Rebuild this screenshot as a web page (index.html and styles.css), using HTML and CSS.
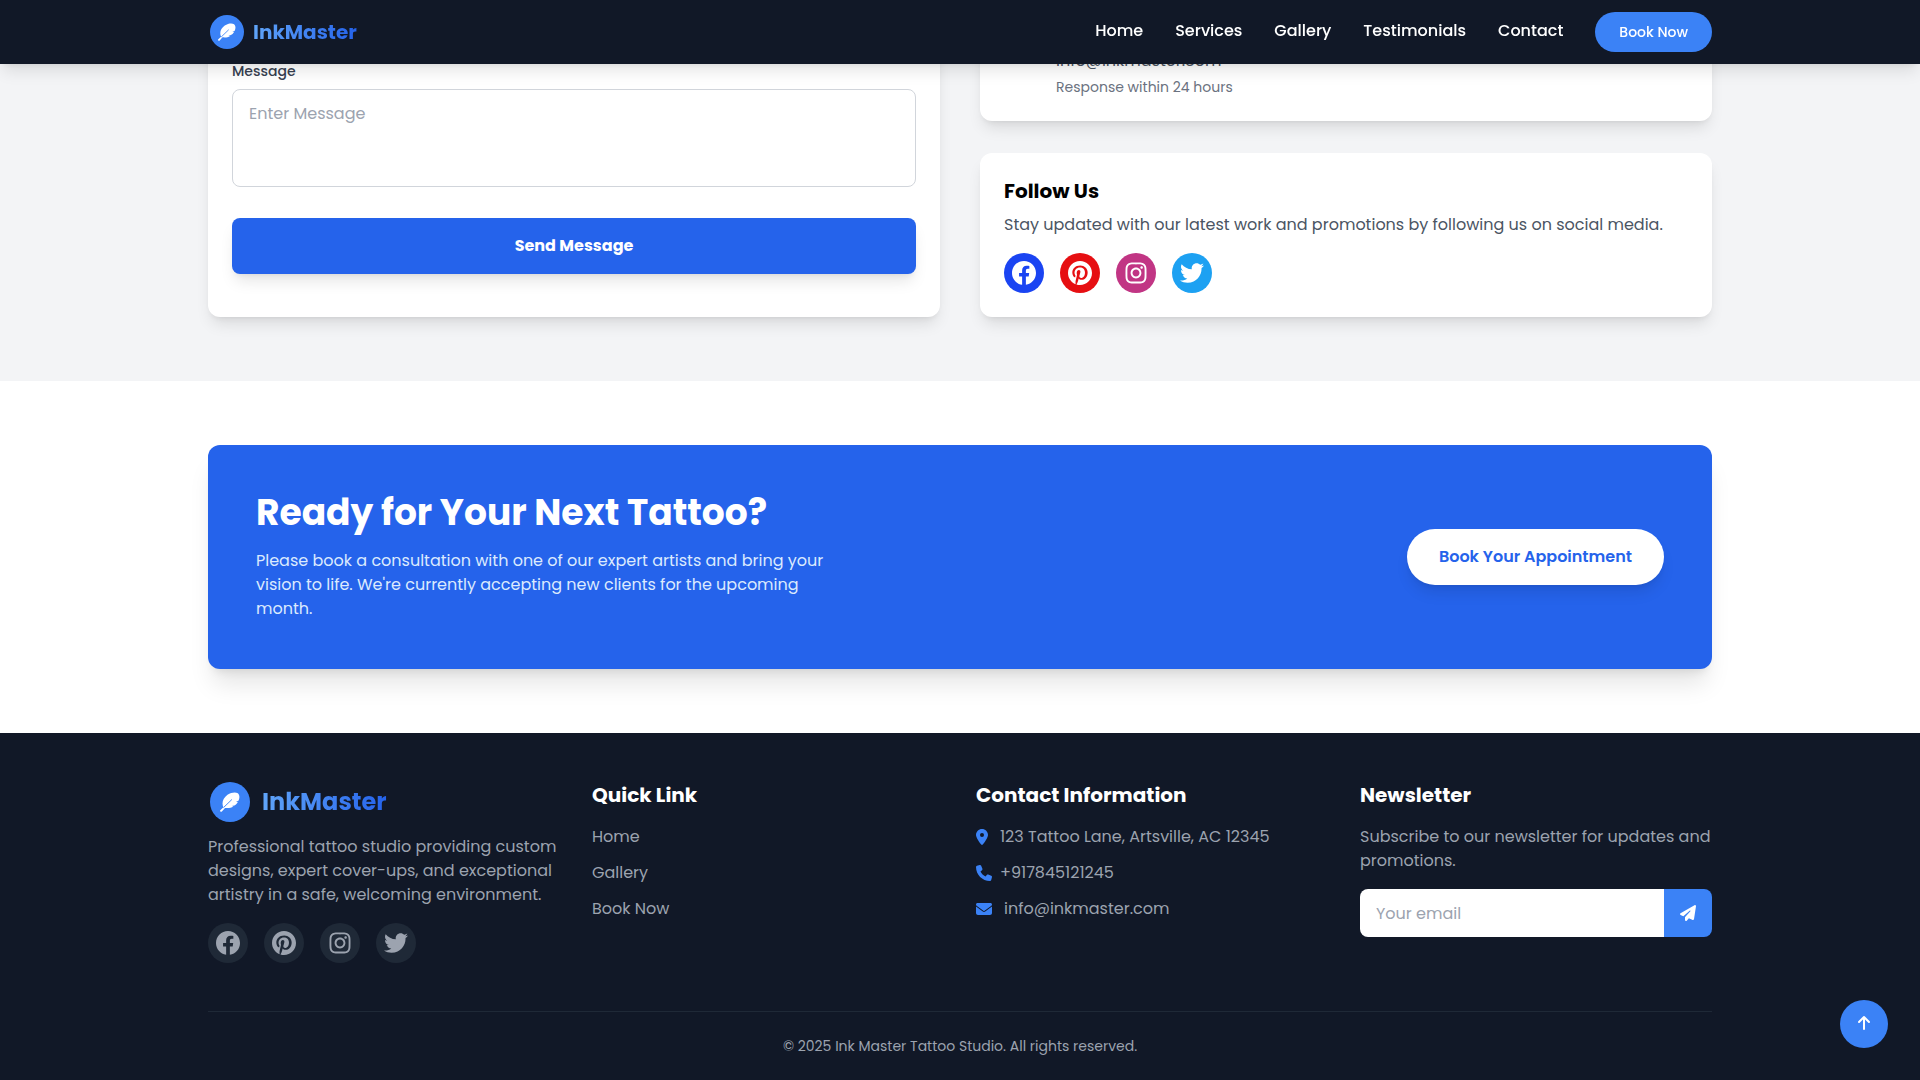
FILE: index.html
```html
<!DOCTYPE html>
<html lang="en">
<head>
    <meta charset="UTF-8">
    <meta name="viewport" content="width=device-width, initial-scale=1.0">
    <title>InkMaster</title>

    <link rel="stylesheet" href="styles.css">
</head>
<body>

    <!-- shared icons -->
    <svg class="sprite" aria-hidden="true">
        <symbol id="feather" viewBox="0 0 64 64"><path d="M11 49C4 34 10 20 24 9C36 1 50 0 57 4C64 10 63 20 59 28L51 31L57 32C54 38 50 41 46 43L37 45L43 46C35 52 24 52 16 51L6 62C3 65-2 61 1 58Z"/><path class="slit" d="M11 50L38 24"/></symbol>
        <symbol id="facebook" viewBox="8 8 496 496"><path d="M504 256C504 119 393 8 256 8S8 119 8 256c0 123.78 90.69 226.38 209.25 245V327.69h-63V256h63v-54.64c0-62.15 37-96.48 93.67-96.48 27.14 0 55.52 4.84 55.52 4.84v61h-31.28c-30.8 0-40.41 19.12-40.41 38.73V256h68.78l-11 71.69h-57.78V501C413.31 482.38 504 379.78 504 256z"/></symbol>
        <symbol id="pinterest" viewBox="0 8 496 496"><path d="M496 256c0 137-111 248-248 248-25.6 0-50.2-3.9-73.4-11.1 10.1-16.5 25.2-43.5 30.8-65 3-11.6 15.4-59 15.4-59 8.1 15.4 31.7 28.5 56.8 28.5 74.8 0 128.7-68.8 128.7-154.3 0-81.9-66.9-143.2-152.9-143.2-107 0-163.9 71.8-163.9 150.1 0 36.4 19.4 81.7 50.3 96.1 4.7 2.2 7.2 1.2 8.3-3.3.8-3.4 5-20.3 6.9-28.1.6-2.5.3-4.7-1.7-7.1-10.1-12.5-18.3-35.3-18.3-56.6 0-54.7 41.4-107.6 112-107.6 60.9 0 103.6 41.5 103.6 100.9 0 67.1-33.9 113.6-78 113.6-24.3 0-42.6-20.1-36.7-44.8 7-29.5 20.5-61.3 20.5-82.6 0-19-10.2-34.9-31.4-34.9-24.9 0-44.9 25.7-44.9 60.2 0 22 7.4 36.8 7.4 36.8s-24.5 103.8-29 123.2c-5 21.4-3 51.6-.9 71.2C65.4 450.9 0 361.1 0 256 0 119 111 8 248 8s248 111 248 248z"/></symbol>
        <symbol id="instagram" viewBox="0 0 448 512"><path d="M224.1 141c-63.6 0-114.9 51.3-114.9 114.9s51.3 114.9 114.9 114.9S339 319.5 339 255.9 287.7 141 224.1 141zm0 189.6c-41.1 0-74.7-33.5-74.7-74.7s33.5-74.7 74.7-74.7 74.7 33.5 74.7 74.7-33.6 74.7-74.7 74.7zm146.4-194.3c0 14.9-12 26.8-26.8 26.8-14.9 0-26.8-12-26.8-26.8s12-26.8 26.8-26.8 26.8 12 26.8 26.8zm76.1 27.2c-1.7-35.9-9.9-67.7-36.2-93.9-26.2-26.2-58-34.4-93.9-36.2-37-2.1-147.9-2.1-184.9 0-35.8 1.7-67.6 9.9-93.9 36.1s-34.4 58-36.2 93.9c-2.1 37-2.1 147.9 0 184.9 1.7 35.9 9.9 67.7 36.2 93.9s58 34.4 93.9 36.2c37 2.1 147.9 2.1 184.9 0 35.9-1.7 67.7-9.9 93.9-36.2 26.2-26.2 34.4-58 36.2-93.9 2.1-37 2.1-147.8 0-184.8zM398.8 388c-7.8 19.6-22.9 34.7-42.6 42.6-29.5 11.7-99.5 9-132.1 9s-102.7 2.6-132.1-9c-19.6-7.8-34.7-22.9-42.6-42.6-11.7-29.5-9-99.5-9-132.1s-2.6-102.7 9-132.1c7.8-19.6 22.9-34.7 42.6-42.6 29.5-11.7 99.5-9 132.1-9s102.7-2.6 132.1 9c19.6 7.8 34.7 22.9 42.6 42.6 11.7 29.5 9 99.5 9 132.1s2.7 102.7-9 132.1z"/></symbol>
        <symbol id="twitter" viewBox="0 0 512 512"><path d="M459.37 151.716c.325 4.548.325 9.097.325 13.645 0 138.72-105.583 298.558-298.558 298.558-59.452 0-114.68-17.219-161.137-47.106 8.447.974 16.568 1.299 25.34 1.299 49.055 0 94.213-16.568 130.274-44.832-46.132-.975-84.792-31.188-98.112-72.772 6.498.974 12.995 1.624 19.818 1.624 9.421 0 18.843-1.3 27.614-3.573-48.081-9.747-84.143-51.98-84.143-102.985v-1.299c13.969 7.797 30.214 12.67 47.431 13.319-28.264-18.843-46.781-51.005-46.781-87.391 0-19.492 5.197-37.36 14.294-52.954 51.655 63.675 129.3 105.258 216.365 109.807-1.624-7.797-2.599-15.918-2.599-24.04 0-57.828 46.782-104.934 104.934-104.934 30.213 0 57.502 12.67 76.67 33.137 23.715-4.548 46.456-13.32 66.599-25.34-7.798 24.366-24.366 44.833-46.132 57.827 21.117-2.273 41.584-8.122 60.426-16.243-14.292 20.791-32.161 39.308-52.628 54.253z"/></symbol>
    </svg>

    <header class="navbar">
        <div class="container nav-content">
            <a href="#" class="logo">
                <span class="logo-icon"><svg><use href="#feather"/></svg></span>
                <span class="logo-text">InkMaster</span>
            </a>

            <nav class="nav-links">
                <a href="#">Home</a>
                <a href="#">Services</a>
                <a href="#">Gallery</a>
                <a href="#">Testimonials</a>
                <a href="#">Contact</a>
                <button type="button" class="nav-button">Book Now</button>
            </nav>
        </div>
    </header>

    <main>
        <section class="contact">
            <div class="container contact-grid">

                <form class="card contact-form">
                    <label for="message">Message</label>
                    <textarea id="message" name="message" placeholder="Enter Message"></textarea>
                    <button type="submit" class="send-button">Send Message</button>
                </form>

                <div class="contact-side">
                    <div class="card email-card">
                        <p class="email-address">info@inkmaster.com</p>
                        <p class="email-note">Response within 24 hours</p>
                    </div>

                    <div class="card follow-card">
                        <h3>Follow Us</h3>
                        <p>Stay updated with our latest work and promotions by following us on social media.</p>
                        <div class="socials">
                            <a href="#" class="facebook" aria-label="Facebook"><svg><use href="#facebook"/></svg></a>
                            <a href="#" class="pinterest" aria-label="Pinterest"><svg><use href="#pinterest"/></svg></a>
                            <a href="#" class="instagram" aria-label="Instagram"><svg><use href="#instagram"/></svg></a>
                            <a href="#" class="twitter" aria-label="Twitter"><svg><use href="#twitter"/></svg></a>
                        </div>
                    </div>
                </div>

            </div>
        </section>

        <section class="cta">
            <div class="container">
                <div class="cta-box">
                    <div class="cta-text">
                        <h2>Ready for Your Next Tattoo?</h2>
                        <p>Please book a consultation with one of our expert artists and bring your vision to life. We're currently accepting new clients for the upcoming month.</p>
                    </div>
                    <button type="button" class="cta-button">Book Your Appointment</button>
                </div>
            </div>
        </section>
    </main>

    <footer class="footer">
        <div class="container">
            <div class="footer-grid">

                <div class="footer-about">
                    <a href="#" class="logo logo-large">
                        <span class="logo-icon"><svg><use href="#feather"/></svg></span>
                        <span class="logo-text">InkMaster</span>
                    </a>
                    <p>Professional tattoo studio providing custom designs, expert cover-ups, and exceptional artistry in a safe, welcoming environment.</p>
                    <div class="socials">
                        <a href="#" aria-label="Facebook"><svg><use href="#facebook"/></svg></a>
                        <a href="#" aria-label="Pinterest"><svg><use href="#pinterest"/></svg></a>
                        <a href="#" aria-label="Instagram"><svg><use href="#instagram"/></svg></a>
                        <a href="#" aria-label="Twitter"><svg><use href="#twitter"/></svg></a>
                    </div>
                </div>

                <div>
                    <h3>Quick Link</h3>
                    <ul>
                        <li><a href="#">Home</a></li>
                        <li><a href="#">Gallery</a></li>
                        <li><a href="#">Book Now</a></li>
                    </ul>
                </div>

                <div>
                    <h3>Contact Information</h3>
                    <ul class="contact-list">
                        <li class="address">
                            <svg viewBox="0 0 384 512"><path d="M215.7 499.2C267 435 384 279.4 384 192C384 86 298 0 192 0S0 86 0 192c0 87.4 117 243 168.3 307.2c12.3 15.3 35.1 15.3 47.4 0zM192 128a64 64 0 1 1 0 128 64 64 0 1 1 0-128z"/></svg>
                            123 Tattoo Lane, Artsville, AC 12345
                        </li>
                        <li class="phone">
                            <svg viewBox="0 0 512 512"><path d="M164.9 24.6c-7.7-18.6-28-28.5-47.4-23.2l-88 24C12.1 30.2 0 46 0 64C0 311.4 200.6 512 448 512c18 0 33.8-12.1 38.6-29.5l24-88c5.3-19.4-4.6-39.7-23.2-47.4l-96-40c-16.3-6.8-35.2-2.1-46.3 11.6L304.7 368C234.3 334.7 177.3 277.7 144 207.3L193.3 167c13.7-11.2 18.4-30 11.6-46.3l-40-96z"/></svg>
                            +917845121245
                        </li>
                        <li class="email">
                            <svg viewBox="0 0 512 512"><path d="M48 64C21.5 64 0 85.5 0 112c0 15.1 7.1 29.3 19.2 38.4L236.8 313.6c11.4 8.5 27 8.5 38.4 0L492.8 150.4c12.1-9.1 19.2-23.3 19.2-38.4c0-26.5-21.5-48-48-48H48zM0 176V384c0 35.3 28.7 64 64 64H448c35.3 0 64-28.7 64-64V176L294.4 339.2c-22.8 17.1-54 17.1-76.8 0L0 176z"/></svg>
                            info@inkmaster.com
                        </li>
                    </ul>
                </div>

                <div>
                    <h3>Newsletter</h3>
                    <p>Subscribe to our newsletter for updates and promotions.</p>
                    <form class="newsletter">
                        <input type="email" name="email" placeholder="Your email" aria-label="Your email">
                        <button type="submit" aria-label="Subscribe">
                            <svg viewBox="0 0 512 512"><path d="M498.1 5.6c10.1 7 15.4 19.1 13.5 31.2l-64 416c-1.5 9.7-7.4 18.2-16 23s-18.9 5.4-28 1.6L284 427.7l-68.5 74.1c-8.9 9.7-22.9 12.9-35.2 8.1S160 493.2 160 480V396.4c0-4 1.5-7.8 4.2-10.7L331.8 202.8c5.8-6.3 5.6-16-.4-22s-15.7-6.4-22-.7L106 360.8 17.7 316.6C7.1 311.3 .3 300.7 0 288.9s5.9-22.8 16.1-28.7l448-256c10.7-6.1 23.9-5.5 34 1.4z"/></svg>
                        </button>
                    </form>
                </div>

            </div>

            <p class="copyright">© 2025 Ink Master Tattoo Studio. All rights reserved.</p>
        </div>
    </footer>

    <button type="button" class="to-top" aria-label="Back to top">
        <svg viewBox="0 0 16 16"><path d="M8 13V1M3 6l5-5 5 5"/></svg>
    </button>

</body>
</html>
```
FILE: styles.css
```css
*{
    margin: 0;
    padding: 0;
    box-sizing: border-box;
}

body{
    font-family: Poppins, Inter, "Open Sans", sans-serif;
    font-size: 16px;
    line-height: 24px;
    color: black;
    background-color: white;
}

a{
    color: inherit;
    text-decoration: none;
}

ul{
    list-style: none;
}

button, input, textarea{
    font: inherit;
    border: 0;
    outline: none;
}

button{
    cursor: pointer;
}

svg{
    display: block;
    fill: currentColor;
    overflow: visible;
}

h3{
    font-size: 20px;
    line-height: 28px;
    font-weight: 700;
}

::placeholder{
    color: #9ca3af;
    opacity: 1;
}

.sprite{
    display: none;
}

.slit{
    fill: none;
    stroke: #3b82f6;
    stroke-width: 3;
}

.container{
    width: 100%;
    max-width: 1536px;
    margin: 0 auto;
    padding: 0 16px;
}

/* navbar */

.navbar{
    position: fixed;
    top: 0;
    left: 0;
    right: 0;
    z-index: 10;
    background-color: #111827;
    color: white;
    box-shadow: 0 10px 15px -3px rgba(0, 0, 0, 0.1), 0 4px 6px -4px rgba(0, 0, 0, 0.1);
}

.nav-content{
    display: flex;
    align-items: center;
    justify-content: space-between;
    height: 64px;
}

.logo{
    display: flex;
    align-items: center;
    gap: 9px;
    padding-left: 2px;
    font-size: 20px;
    font-weight: 700;
}

.logo-icon{
    display: flex;
    align-items: center;
    justify-content: center;
    width: 34px;
    height: 34px;
    border-radius: 50%;
    background-color: #3b82f6;
    color: white;
}

.logo-icon svg{
    width: 18px;
    height: 18px;
}

.logo-text{
    background: linear-gradient(to right, #60a5fa, #2563eb);
    background-clip: text;
    -webkit-background-clip: text;
    color: transparent;
}

.nav-links{
    display: flex;
    align-items: center;
    gap: 32px;
    font-weight: 500;
}

.nav-links a{
    padding-bottom: 2px;
}

.nav-button{
    padding: 8px 24px;
    border-radius: 20px;
    background-color: #3b82f6;
    color: white;
    font-size: 14px;
    font-weight: 500;
}

/* contact */

.contact{
    padding-bottom: 64px;
    background-color: #f3f4f6;
}

.contact-grid{
    display: grid;
    grid-template-columns: 1fr 1fr;
    gap: 40px;
}

.card{
    padding: 24px;
    border-radius: 12px;
    background-color: white;
    box-shadow: 0 10px 15px -3px rgba(0, 0, 0, 0.1), 0 4px 6px -4px rgba(0, 0, 0, 0.1);
}

.contact-form{
    display: flex;
    flex-direction: column;
    padding-top: 61px;
    border-top-left-radius: 0;
    border-top-right-radius: 0;
}

.contact-form label{
    margin-bottom: 8px;
    color: #374151;
    font-size: 14px;
    line-height: 20px;
    font-weight: 500;
}

.contact-form textarea{
    height: 98px;
    padding: 12px 16px;
    border: 1px solid #d1d5db;
    border-radius: 8px;
    resize: none;
}

.send-button{
    margin-top: 31px;
    padding: 16px;
    border-radius: 8px;
    background-color: #2563eb;
    color: white;
    font-weight: 700;
    box-shadow: 0 10px 15px -3px rgba(0, 0, 0, 0.1), 0 4px 6px -4px rgba(0, 0, 0, 0.1);
}

.contact-side{
    display: flex;
    flex-direction: column;
    gap: 32px;
}

.email-card{
    padding: 49px 24px 24px 76px;
    border-top-left-radius: 0;
    border-top-right-radius: 0;
}

.email-address{
    color: #4b5563;
}

.email-note{
    margin-top: 4px;
    color: #6b7280;
    font-size: 14px;
    line-height: 20px;
}

.follow-card p{
    margin-top: 8px;
    color: #4b5563;
}

.socials{
    display: flex;
    gap: 16px;
    margin-top: 16px;
}

.socials a{
    display: flex;
    align-items: center;
    justify-content: center;
    width: 40px;
    height: 40px;
    border-radius: 50%;
    color: white;
}

.socials svg{
    width: 24px;
    height: 24px;
}

.socials .facebook{
    background-color: #1a44f2;
}

.socials .pinterest{
    background-color: #e60f12;
}

.socials .instagram{
    background-color: #c13584;
}

.socials .twitter{
    background-color: #1da1f2;
}

/* call to action */

.cta{
    padding: 64px 0;
}

.cta-box{
    display: flex;
    align-items: center;
    justify-content: space-between;
    padding: 48px;
    border-radius: 12px;
    background-color: #2563eb;
    color: white;
    box-shadow: 0 20px 25px -5px rgba(0, 0, 0, 0.1), 0 8px 10px -6px rgba(0, 0, 0, 0.1);
}

.cta-text{
    max-width: 576px;
}

.cta-text h2{
    font-size: 36px;
    line-height: 40px;
    font-weight: 700;
}

.cta-text p{
    margin-top: 16px;
    color: #dbeafe;
}

.cta-button{
    padding: 16px 32px;
    border-radius: 28px;
    background-color: white;
    color: #2563eb;
    font-weight: 600;
    box-shadow: 0 10px 15px -3px rgba(0, 0, 0, 0.1), 0 4px 6px -4px rgba(0, 0, 0, 0.1);
}

/* footer */

.footer{
    padding: 48px 0 24px;
    background-color: #111827;
    color: #9ca3af;
}

.footer-grid{
    display: grid;
    grid-template-columns: repeat(4, minmax(0, 1fr));
    gap: 32px;
}

.footer h3{
    margin-bottom: 16px;
    color: white;
}

.footer li{
    margin-bottom: 12px;
}

.logo-large{
    gap: 12px;
    margin-bottom: 13px;
    font-size: 24px;
}

.logo-large .logo-icon{
    width: 40px;
    height: 40px;
}

.logo-large .logo-icon svg{
    width: 20px;
    height: 20px;
}

.footer-about{
    padding-top: 1px;
}

.footer .socials a{
    background-color: #1f2937;
    color: #9ca3af;
}

.contact-list li{
    display: flex;
    align-items: center;
    gap: 8px;
}

.contact-list svg{
    width: 16px;
    height: 16px;
    color: #3b82f6;
}

.contact-list .address, .contact-list .email{
    gap: 12px;
}

.contact-list .address svg{
    width: 12px;
}

.newsletter{
    display: flex;
    margin-top: 16px;
}

.newsletter input{
    flex: 1;
    min-width: 0;
    height: 48px;
    padding: 0 16px;
    border-radius: 8px 0 0 8px;
    background-color: white;
}

.newsletter button{
    padding: 16px;
    border-radius: 0 8px 8px 0;
    background-color: #3b82f6;
    color: white;
}

.newsletter svg{
    width: 16px;
    height: 16px;
}

.copyright{
    margin-top: 48px;
    padding-top: 24px;
    border-top: 1px solid #1f2937;
    font-size: 14px;
    line-height: 20px;
    text-align: center;
}

.to-top{
    position: fixed;
    right: 32px;
    bottom: 32px;
    display: flex;
    align-items: center;
    justify-content: center;
    width: 48px;
    height: 48px;
    border-radius: 50%;
    background-color: #3b82f6;
    color: white;
}

.to-top svg{
    width: 16px;
    height: 16px;
    fill: none;
    stroke: currentColor;
    stroke-width: 2;
    stroke-linecap: round;
    stroke-linejoin: round;
}
```
